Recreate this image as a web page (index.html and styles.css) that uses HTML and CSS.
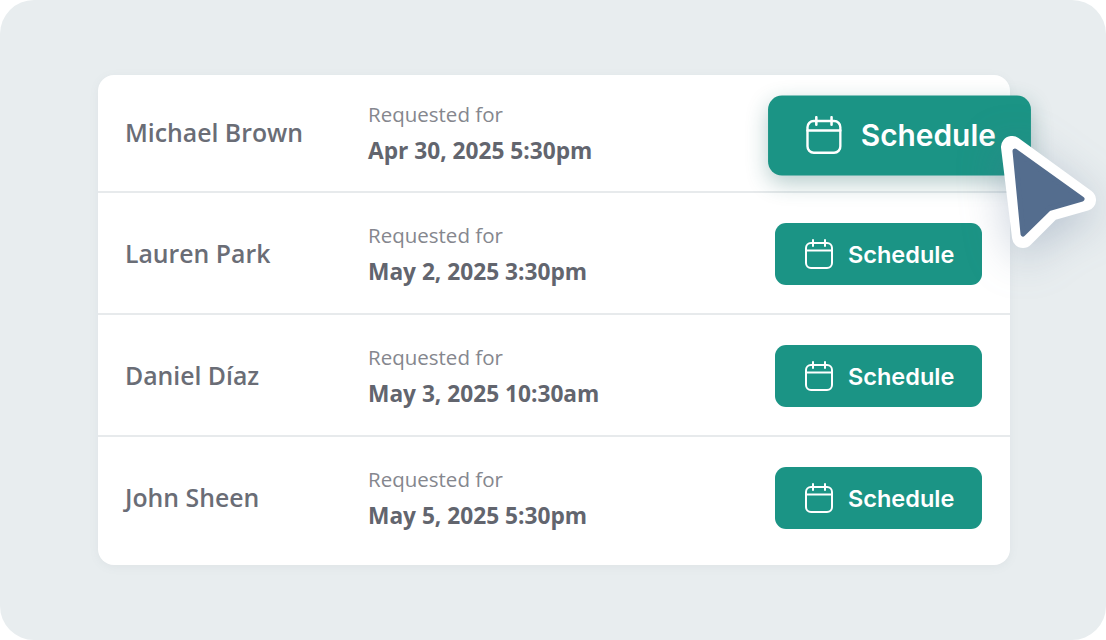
FILE: index.html
```html
<!DOCTYPE html>
<html lang="en">
<head>
<meta charset="utf-8">
<title>Schedule requests</title>
<link rel="stylesheet" href="styles.css">
</head>
<body>
<main class="stage">
  <section class="card">
    <div class="row row-first">
      <div class="name">Michael Brown</div>
      <div class="when"><div class="label">Requested for</div><div class="date">Apr 30, 2025 5:30pm</div></div>
      <button class="btn btn-active"><svg class="cal" viewBox="0 0 28 30"><rect x="1" y="4" width="26" height="25" rx="5"/><path d="M1 11.5H27M8 1V7M20 1V7"/></svg><span>Schedule</span></button>
    </div>
    <div class="row">
      <div class="name">Lauren Park</div>
      <div class="when"><div class="label">Requested for</div><div class="date">May 2, 2025 3:30pm</div></div>
      <button class="btn"><svg class="cal" viewBox="0 0 28 30"><rect x="1" y="4" width="26" height="25" rx="5"/><path d="M1 11.5H27M8 1V7M20 1V7"/></svg><span>Schedule</span></button>
    </div>
    <div class="row">
      <div class="name">Daniel Díaz</div>
      <div class="when"><div class="label">Requested for</div><div class="date">May 3, 2025 10:30am</div></div>
      <button class="btn"><svg class="cal" viewBox="0 0 28 30"><rect x="1" y="4" width="26" height="25" rx="5"/><path d="M1 11.5H27M8 1V7M20 1V7"/></svg><span>Schedule</span></button>
    </div>
    <div class="row row-last">
      <div class="name">John Sheen</div>
      <div class="when"><div class="label">Requested for</div><div class="date">May 5, 2025 5:30pm</div></div>
      <button class="btn"><svg class="cal" viewBox="0 0 28 30"><rect x="1" y="4" width="26" height="25" rx="5"/><path d="M1 11.5H27M8 1V7M20 1V7"/></svg><span>Schedule</span></button>
    </div>
  </section>
  <svg class="cursor" viewBox="0 0 120 130" aria-hidden="true">
    <path class="cursor-edge" d="M22 21L95 74L60 84L33 111Z"/>
    <path class="cursor-fill" d="M25 25L92 73L59 82.500L33 108Z"/>
  </svg>
</main>
</body>
</html>
```

FILE: styles.css
```css
* { box-sizing: border-box; }
html, body { margin: 0; padding: 0; background: #fff; }
.stage {
  position: relative;
  width: 1106px;
  height: 640px;
  padding: 75px 96px 75px 98px;
  background: #e8edef;
  border-radius: 34px;
  overflow: hidden;
  font-family: "Open Sans", sans-serif;
}
.card {
  width: 912px;
  height: 490px;
  background: #fff;
  border-radius: 16px;
  box-shadow: 0 2px 10px rgba(120, 130, 140, 0.08);
  display: flex;
  flex-direction: column;
}
.row {
  height: 122px;
  flex: none;
  display: flex;
  align-items: center;
  padding: 2px 28px 0 27px;
  border-bottom: 2px solid #e7eaec;
}
.row-first { height: 118px; padding-top: 0; }
.row-last { height: 128px; border-bottom: 0; padding-top: 0; padding-bottom: 6px; }
.name {
  width: 243px;
  margin-top: -2px;
  font-size: 24.800px;
  font-weight: 550;
  line-height: 32px;
  color: #6a6d76;
}
.when { flex: 1; }
.label {
  font-size: 20.500px;
  line-height: 26px;
  font-weight: 500;
  margin-top: -1px;
  color: #85878e;
}
.date {
  margin-top: 11.500px;
  font-size: 22.700px;
  line-height: 26px;
  font-weight: 680;
  color: #62656e;
}
.btn {
  width: 207px;
  height: 62.500px;
  flex: none;
  display: flex;
  align-items: center;
  gap: 15px;
  padding: 0 0 0 30px;
  border: 0;
  border-radius: 11px;
  background: #1b9485;
  color: #fff;
  font-family: "Inter", sans-serif;
  font-size: 23.500px;
  font-weight: 600;
}
.btn-active {
  transform: translate(21px, 2px) scale(1.27);
  box-shadow: 0 6px 18px rgba(28, 100, 95, 0.32);
  position: relative;
  z-index: 1;
}
.cal {
  width: 28px;
  height: 30px;
  flex: none;
  fill: none;
  stroke: #fff;
  stroke-width: 2;
  stroke-linecap: round;
}
.cursor {
  position: absolute;
  left: 990px;
  top: 126px;
  width: 120px;
  height: 130px;
  overflow: visible;
  z-index: 2;
  filter: drop-shadow(0 10px 22px rgba(84, 109, 142, 0.32));
}
.cursor-edge {
  fill: #fff;
  stroke: #fff;
  stroke-width: 22;
  stroke-linejoin: round;
}
.cursor-fill {
  fill: #546d8e;
  stroke: #546d8e;
  stroke-width: 5;
  stroke-linejoin: round;
}
```
